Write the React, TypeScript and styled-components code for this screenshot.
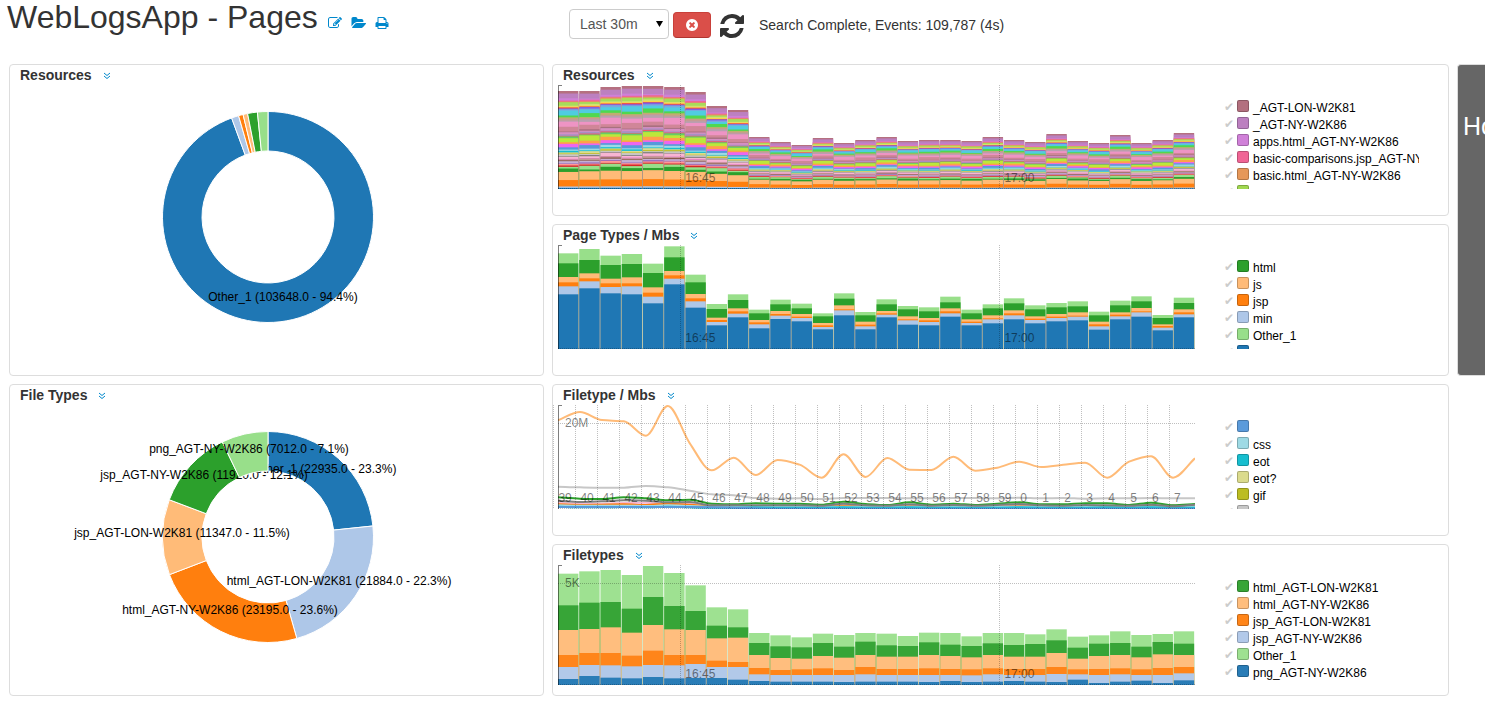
import React from 'react';
import styled, { createGlobalStyle } from 'styled-components';

const GlobalStyle = createGlobalStyle`
  * { box-sizing: border-box; }
  body {
    margin: 0;
    background: #fff;
    color: #333;
    font-family: "Liberation Sans", Arial, sans-serif;
    font-size: 14px;
    line-height: 20px;
    overflow-x: hidden;
  }
`;

/* ---------- styled parts ---------- */

const Header = styled.header`
  display: grid;
  grid-template-columns: minmax(0, 537fr) minmax(0, 897fr) 28px;
  column-gap: 8px;
  height: 64px;
  padding-left: 7px;
`;

const TitleBar = styled.div`
  display: flex;
  align-items: flex-start;
  gap: 10px;
`;

const PageTitle = styled.h1`
  margin: 0;
  font-size: 32px;
  font-weight: 400;
  line-height: 34px;
  white-space: nowrap;
`;

const TitleActions = styled.nav`
  display: flex;
  gap: 9px;
  padding-top: 16px;
`;

const IconLink = styled.a`
  display: flex;
  color: #0088cc;
`;

const Controls = styled.div`
  display: flex;
  align-items: flex-start;
  padding: 9px 0 0 17px;
`;

const SelectBox = styled.div`
  position: relative;
  width: 100px;
  margin-right: 4px;
`;

const RangeSelect = styled.select`
  appearance: none;
  display: block;
  width: 100%;
  height: 30px;
  padding: 0 10px;
  border: 1px solid #ccc;
  border-radius: 4px;
  background: #fff;
  color: #555;
  font: inherit;
`;

const SelectArrow = styled.svg`
  position: absolute;
  right: 6px;
  top: 12px;
  pointer-events: none;
`;

const StopButton = styled.button`
  display: flex;
  align-items: center;
  justify-content: center;
  width: 38px;
  height: 26px;
  margin: 3px 9px 0 0;
  padding: 0;
  border: 1px solid #c9403a;
  border-bottom-color: #b03530;
  border-radius: 4px;
  background: #da4f49;
  color: #fff;
`;

const RefreshButton = styled.button`
  display: flex;
  margin: 3px 15px 0 0;
  padding: 0;
  border: 0;
  background: none;
  color: #333;
`;

const Status = styled.span`
  padding-top: 6px;
  white-space: nowrap;
`;

const Dashboard = styled.main`
  display: grid;
  grid-template-columns: minmax(0, 535fr) minmax(0, 897fr) 28px;
  grid-auto-rows: 152px;
  gap: 8px;
  padding: 0 0 24px 9px;
`;

const Panel = styled.section<{ $col: number; $row: number; $span?: number }>`
  grid-column: ${(p) => p.$col};
  grid-row: ${(p) => p.$row} / span ${(p) => p.$span ?? 1};
  min-width: 0;
  border: 1px solid #ddd;
  border-radius: 4px;
  background: #fff;
`;

const DarkPanel = styled(Panel)`
  padding: 46px 0 0 5px;
  border-right: 0;
  border-radius: 4px 0 0 4px;
  background: #666;
  color: #fff;
  font-size: 25px;
  line-height: 30px;
  white-space: nowrap;
  overflow: hidden;
`;

const PanelHead = styled.div`
  display: flex;
  align-items: center;
  gap: 11px;
  height: 20px;
  padding-left: 10px;
`;

const PanelTitle = styled.h2`
  margin: 0;
  font-size: 14px;
  font-weight: 700;
  line-height: 20px;
`;

const MenuButton = styled.button`
  display: flex;
  margin-top: 2px;
  padding: 0;
  border: 0;
  background: none;
  color: #0088cc;
`;

const DonutArea = styled.div`
  display: flex;
  justify-content: center;
  padding: 26px 17px 0 0;
`;

const DonutSvg = styled.svg`
  overflow: visible;
  font-size: 12px;
`;

const ChartBody = styled.div<{ $height: number }>`
  display: flex;
  gap: 29px;
  height: ${(p) => p.$height}px;
  padding: 0 29px 0 5px;
`;

const ChartSvg = styled.svg`
  flex: 1;
  min-width: 0;
  height: 100%;
  overflow: visible;
  font-size: 12px;
`;

const Legend = styled.ul`
  flex: none;
  width: 195px;
  height: 100%;
  margin: 0;
  padding: 14px 0 0;
  overflow: hidden;
  list-style: none;
`;

const LegendRow = styled.label`
  display: flex;
  align-items: flex-start;
  height: 17px;
  color: #000;
  font-size: 12px;
  line-height: 18px;
  white-space: nowrap;
`;

const Tick = styled.input`
  appearance: none;
  flex: none;
  width: 10px;
  height: 17px;
  margin: 0 3px 0 0;
  color: #ccc;
  font-family: "DejaVu Sans", sans-serif;
  font-size: 12px;
  line-height: 17px;

  &:checked::before {
    content: "✔";
  }
`;

const Swatch = styled.span<{ $color: string }>`
  flex: none;
  width: 12px;
  height: 12px;
  margin: 1px 4px 0 0;
  border: 1px solid rgba(0, 0, 0, 0.22);
  border-radius: 2px;
  background: ${(p) => p.$color};
`;

/* ---------- icons ---------- */

const ICONS = {
  edit: {
    w: 1792,
    d: 'M888 1184l116-116-152-152-116 116v56h96v96h56zm440-720q-16-16-33 1l-350 350q-17 17-1 33t33-1l350-350q17-17 1-33zm80 594v190q0 119-84.5 203.5t-203.5 84.5h-832q-119 0-203.5-84.5t-84.5-203.5v-832q0-119 84.5-203.5t203.5-84.5h832q63 0 117 25 15 7 18 23 3 17-9 29l-49 49q-14 14-32 8-23-6-45-6h-832q-66 0-113 47t-47 113v832q0 66 47 113t113 47h832q66 0 113-47t47-113v-126q0-13 9-22l64-64q15-15 35-7t20 29zm-96-738l288 288-672 672h-288v-288zm444 132l-92 92-288-288 92-92q28-28 68-28t68 28l152 152q28 28 28 68t-28 68z',
  },
  open: {
    w: 1943,
    d: 'M1943 952q0 31-31 66l-336 396q-43 51-120.5 86.5t-143.5 35.5h-1088q-34 0-60.5-13t-26.5-43q0-31 31-66l336-396q43-51 120.5-86.5t143.5-35.5h1088q34 0 60.5 13t26.5 43zm-343-344v160h-832q-94 0-197 47.5t-164 119.5l-337 396-5 6q0-4-.5-12.5t-.5-12.5v-960q0-92 66-158t158-66h320q92 0 158 66t66 158v32h544q92 0 158 66t66 158z',
  },
  print: {
    w: 1792,
    d: 'M448 1536h896v-256h-896v256zm0-640h896v-384h-160q-40 0-68-28t-28-68v-160h-640v640zm1152 64q0-26-19-45t-45-19-45 19-19 45 19 45 45 19 45-19 19-45zm128 0v416q0 13-9.5 22.5t-22.5 9.5h-224v160q0 40-28 68t-68 28h-960q-40 0-68-28t-28-68v-160h-224q-13 0-22.5-9.5t-9.5-22.5v-416q0-79 56.5-135.5t135.5-56.5h64v-544q0-40 28-68t68-28h672q40 0 88 20t76 48l152 152q28 28 48 76t20 88v256h64q79 0 135.5 56.5t56.5 135.5z',
  },
  stop: {
    w: 1792,
    d: 'M1277 1122q0-26-19-45l-181-181 181-181q19-19 19-45 0-27-19-46l-90-90q-19-19-46-19-26 0-45 19l-181 181-181-181q-19-19-45-19-27 0-46 19l-90 90q-19 19-19 46 0 26 19 45l181 181-181 181q-19 19-19 45 0 27 19 46l90 90q19 19 46 19 26 0 45-19l181-181 181 181q19 19 45 19 27 0 46-19l90-90q19-19 19-46zm387-226q0 209-103 385.5t-279.5 279.5-385.5 103-385.5-103-279.5-279.5-103-385.5 103-385.5 279.5-279.5 385.5-103 385.5 103 279.5 279.5 103 385.5z',
  },
  refresh: {
    w: 1536,
    x: 128,
    d: 'M1639 1056q0 5-1 7-64 268-268 434.5t-478 166.5q-146 0-282.5-55t-243.5-157l-129 129q-19 19-45 19t-45-19-19-45v-448q0-26 19-45t45-19h448q26 0 45 19t19 45-19 45l-137 137q71 66 161 102t187 36q134 0 250-65t186-179q11-17 53-117 8-23 30-23h192q13 0 22.5 9.5t9.5 22.5zm25-800v448q0 26-19 45t-45 19h-448q-26 0-45-19t-19-45 19-45l138-138q-148-137-349-137-134 0-250 65t-186 179q-11 17-53 117-8 23-30 23h-199q-13 0-22.5-9.5t-9.5-22.5v-7q65-268 270-434.5t480-166.5q146 0 284 55.5t245 156.5l130-129q19-19 45-19t45 19 19 45z',
  },
};

function Icon({ name, size }: { name: keyof typeof ICONS; size: number }) {
  const icon = ICONS[name] as { w: number; x?: number; d: string };
  return (
    <svg
      width={Math.round((size * icon.w) / 1792)}
      height={size}
      viewBox={`${icon.x ?? 0} 0 ${icon.w} 1792`}
      fill="currentColor"
      aria-hidden="true"
    >
      <path d={icon.d} />
    </svg>
  );
}

function PanelHeading({ title }: { title: string }) {
  return (
    <PanelHead>
      <PanelTitle>{title}</PanelTitle>
      <MenuButton type="button" aria-label={`${title} options`}>
        <svg width="8" height="8" viewBox="0 0 8 8" fill="none" stroke="currentColor" aria-hidden="true">
          <path d="M1 1l3 2.5L7 1M1 4l3 2.5L7 4" />
        </svg>
      </MenuButton>
    </PanelHead>
  );
}

/* ---------- donut charts ---------- */

const CATEGORY = ['#1f77b4', '#aec7e8', '#ff7f0e', '#ffbb78', '#2ca02c', '#98df8a'];

interface Slice {
  value: number;
  label?: string;
  x?: number;
  y?: number;
}

const RESOURCE_SLICES: Slice[] = [
  { value: 94.4, label: 'Other_1 (103648.0 - 94.4%)', x: 15, y: 84 },
  { value: 1.1 },
  { value: 0.7 },
  { value: 0.7 },
  { value: 1.5 },
  { value: 1.6 },
];

const FILE_SLICES: Slice[] = [
  { value: 22935, label: 'Other_1 (22935.0 - 23.3%)', x: 57, y: -64 },
  { value: 21884, label: 'html_AGT-LON-W2K81 (21884.0 - 22.3%)', x: 71, y: 48 },
  { value: 23195, label: 'html_AGT-NY-W2K86 (23195.0 - 23.6%)', x: -38, y: 77 },
  { value: 11347, label: 'jsp_AGT-LON-W2K81 (11347.0 - 11.5%)', x: -86, y: 0 },
  { value: 11920, label: 'jsp_AGT-NY-W2K86 (11920.0 - 12.1%)', x: -64, y: -58 },
  { value: 7012, label: 'png_AGT-NY-W2K86 (7012.0 - 7.1%)', x: -19, y: -84 },
];

function arcPath(start: number, end: number, outer: number, inner: number) {
  const at = (angle: number, r: number) => `${r * Math.sin(angle)} ${-r * Math.cos(angle)}`;
  const large = end - start > Math.PI ? 1 : 0;
  return `M${at(start, outer)}A${outer} ${outer} 0 ${large} 1 ${at(end, outer)}L${at(end, inner)}A${inner} ${inner} 0 ${large} 0 ${at(start, inner)}Z`;
}

function Donut({ slices, name }: { slices: Slice[]; name: string }) {
  const total = slices.reduce((sum, s) => sum + s.value, 0);
  let angle = 0;
  return (
    <DonutArea>
      <DonutSvg width="212" height="212" viewBox="-106 -106 212 212" role="img" aria-label={name}>
        {slices.map((s, i) => {
          const start = angle;
          angle += (s.value / total) * Math.PI * 2;
          return (
            <g key={i}>
              <path d={arcPath(start, angle, 105.5, 66)} fill={CATEGORY[i]} stroke="#fff" />
              {s.label && (
                <text x={s.x} y={s.y} textAnchor="middle" fill="#000">
                  {s.label}
                </text>
              )}
            </g>
          );
        })}
      </DonutSvg>
    </DonutArea>
  );
}

/* ---------- stacked bars ---------- */

interface Layer {
  color: string;
  size: number;
}

/* Every row lists the top edge of each layer, from the highest layer down. */
const PAGE_TOPS = [
  [99, 129, 170, 186, 198, 222], [86, 119, 159, 174, 183, 204], [106, 134, 175, 189, 200, 219],
  [101, 131, 171, 189, 198, 222], [130, 158, 201, 217, 229, 249], [78, 111, 152, 165, 175, 192],
  [163, 186, 221, 234, 243, 262], [251, 266, 292, 299, 305, 315], [222, 239, 264, 273, 280, 291],
  [268, 279, 299, 306, 312, 324], [238, 252, 272, 281, 286, 296], [250, 264, 281, 289, 293, 303],
  [279, 288, 308, 315, 320, 327], [219, 235, 255, 267, 270, 285], [275, 285, 304, 313, 318, 327],
  [237, 252, 272, 279, 283, 291], [257, 267, 288, 297, 300, 313], [261, 273, 293, 300, 305, 315],
  [229, 246, 264, 273, 279, 289], [268, 279, 297, 304, 308, 315], [252, 264, 285, 294, 297, 309],
  [234, 249, 270, 279, 285, 297], [255, 267, 288, 295, 299, 309], [248, 261, 281, 289, 293, 303],
  [243, 258, 276, 286, 289, 300], [274, 285, 304, 312, 318, 328], [241, 255, 276, 283, 288, 297],
  [228, 243, 263, 273, 276, 289], [284, 293, 312, 317, 322, 330], [232, 248, 267, 276, 282, 291],
];

const FILE_TOPS = [
  [101, 196, 270, 345, 381, 417], [94, 188, 267, 339, 375, 408], [90, 186, 262, 339, 376, 413],
  [105, 206, 278, 347, 379, 415], [78, 171, 255, 332, 375, 411], [99, 198, 268, 345, 376, 415],
  [136, 213, 270, 345, 372, 414], [202, 257, 295, 362, 381, 414], [208, 262, 293, 366, 381, 419],
  [279, 309, 345, 384, 403, 423], [286, 319, 354, 390, 405, 425], [292, 322, 356, 388, 405, 425],
  [281, 309, 348, 385, 405, 425], [285, 320, 353, 390, 405, 426], [279, 305, 345, 381, 403, 425],
  [281, 316, 350, 387, 405, 425], [288, 318, 350, 387, 405, 425], [278, 307, 345, 385, 405, 426],
  [279, 314, 348, 387, 405, 423], [289, 318, 352, 388, 406, 426], [279, 310, 345, 385, 403, 425],
  [279, 315, 350, 387, 405, 423], [283, 312, 350, 387, 405, 425], [268, 301, 339, 381, 402, 426],
  [290, 323, 356, 388, 403, 419], [286, 311, 348, 387, 405, 429], [274, 309, 345, 385, 403, 425],
  [285, 320, 352, 388, 405, 422], [282, 306, 343, 384, 405, 429], [274, 311, 345, 381, 400, 421],
];

function layersFromTops(rows: number[][], base: number, colors: string[]): Layer[][] {
  return rows.map((tops) =>
    tops.map((top, i) => ({ color: colors[i], size: ((tops[i + 1] ?? base) - top) / 3 })),
  );
}

const RESOURCE_HEIGHTS = [
  98, 98, 102, 103, 103, 102, 97, 83, 79, 52, 47, 44, 51, 46, 49,
  52, 48, 49, 49, 48, 52, 49, 47, 55, 48, 46, 54, 46, 49, 56,
];

/* Thin stripes from the top of the stack down to the broad base layers. */
const RESOURCE_STRIPES: [string, number][] = [
  ['#b57080', 9], ['#bc80c0', 17], ['#cf80d8', 6], ['#ee6699', 4], ['#e6955a', 3], ['#a8dc5a', 9],
  ['#d4e070', 4], ['#ffd54a', 3], ['#f0554a', 3], ['#8060e0', 4], ['#7aa8e0', 5], ['#50cce0', 13],
  ['#4fd84f', 10], ['#c0ae70', 5], ['#c49c94', 5], ['#b8a0b0', 6], ['#ee94c4', 16], ['#d08698', 14],
  ['#a87080', 4], ['#d68fc4', 6], ['#a890c4', 5], ['#e85c6c', 3], ['#66cc66', 5], ['#bce83a', 14],
  ['#ffa04a', 9], ['#ee66ee', 9], ['#5799db', 9], ['#9edae5', 6], ['#17becf', 4], ['#dbdb8d', 5],
  ['#bcbd22', 3], ['#c7c7c7', 5], ['#7f7f7f', 3], ['#f7b6d2', 8], ['#e377c2', 2], ['#c49c94', 4],
  ['#8c564b', 3], ['#c5b0d5', 6], ['#9467bd', 3], ['#ff9896', 5], ['#d62728', 4], ['#98df8a', 10],
  ['#2ca02c', 10], ['#ffbb78', 29], ['#ff7f0e', 23], ['#aec7e8', 5], ['#1f77b4', 4],
];

const RESOURCE_BARS: Layer[][] = RESOURCE_HEIGHTS.map((height, bar) => {
  const sized = RESOURCE_STRIPES.map(([color, size], i) => {
    const steady = i < 2 || i > 42;
    return { color, size: steady ? size : size * (1 + 0.4 * Math.sin(bar * 2.3 + i * 4.1)) };
  });
  const total = sized.reduce((sum, l) => sum + l.size, 0);
  return sized.map((l) => ({ color: l.color, size: (l.size / total) * height }));
});

const PAGE_BARS = layersFromTops(PAGE_TOPS, 386, ['#98df8a', '#2ca02c', '#ffbb78', '#ff7f0e', '#aec7e8', '#1f77b4']);
const FILE_BARS = layersFromTops(FILE_TOPS, 435, ['#9ee191', '#37a537', '#ffbe7e', '#ff851a', '#b2c9e9', '#2a7db7']);

interface Mark {
  at: number;
  label: string;
}

const QUARTERS: Mark[] = [
  { at: 19.2, label: '16:45' },
  { at: 69.3, label: '17:00' },
];

function Axes({ height, marks, level }: { height: number; marks: Mark[]; level?: string }) {
  return (
    <g stroke="#000" strokeOpacity="0.25" shapeRendering="crispEdges">
      <path d={`M4 0.5H0.5V${height}`} fill="none" strokeOpacity="0.5" />
      <line x1="0" x2="100%" y1={height - 0.5} y2={height - 0.5} strokeDasharray="1 1" />
      {level && (
        <>
          <line x1="0" x2="100%" y1="18.5" y2="18.5" strokeDasharray="1 1" />
          <text x="7" y="22" stroke="none" fill="#000" fillOpacity="0.5">
            {level}
          </text>
        </>
      )}
      {marks.map((m) => (
        <React.Fragment key={m.label}>
          <line x1={`${m.at}%`} x2={`${m.at}%`} y1="0" y2={height} strokeDasharray="1 1" />
          <svg x={`${m.at}%`} overflow="visible">
            <text x="5" y={height - 7} stroke="none" fill="#000" fillOpacity="0.5">
              {m.label}
            </text>
          </svg>
        </React.Fragment>
      ))}
    </g>
  );
}

function StackedBars({ bars, height, level, name }: { bars: Layer[][]; height: number; level?: string; name: string }) {
  const step = 100 / bars.length;
  return (
    <ChartSvg role="img" aria-label={name}>
      {bars.map((layers, bar) => {
        let y = height - layers.reduce((sum, l) => sum + l.size, 0);
        return layers.map((layer, i) => {
          const top = y;
          y += layer.size;
          /* Each layer runs to the base so no seam shows under the next one. */
          return (
            <rect
              key={`${bar}-${i}`}
              x={`${bar * step}%`}
              y={top}
              width={`${step * 0.96}%`}
              height={height - top}
              fill={layer.color}
            />
          );
        });
      })}
      <Axes height={height} marks={QUARTERS} level={level} />
    </ChartSvg>
  );
}

/* ---------- line chart ---------- */

interface Series {
  color: string;
  points: number[];
}

const LINE_SERIES: Series[] = [
  {
    color: '#ffbb78',
    points: [121, 96, 120, 124, 167, 78, 190, 271, 233, 285, 240, 254, 293, 223, 291, 234, 269, 270, 230, 272, 263, 245, 261, 254, 248, 293, 245, 229, 293, 235],
  },
  {
    color: '#c7c7c7',
    points: [320, 322, 323, 323, 318, 322, 332, 343, 346, 354, 356, 355, 357, 354, 354, 354, 355, 355, 354, 354, 355, 353, 355, 354, 356, 355, 355, 354, 355, 355],
  },
  {
    color: '#f7b6d2',
    points: [369, 371, 371, 369, 368, 372, 372, 379, 379, 379, 379, 378, 379, 376, 379, 379, 378, 379, 379, 379, 378, 377, 379, 378, 379, 379, 379, 378, 375, 379],
  },
  {
    color: '#ff7f0e',
    points: [373, 375, 374, 373, 375, 371, 374, 379, 380, 380, 380, 379, 380, 377, 380, 379, 379, 380, 380, 380, 380, 379, 380, 380, 380, 379, 380, 379, 380, 380],
  },
  {
    color: '#9edae5',
    points: [376, 377, 377, 377, 378, 376, 378, 380, 381, 380, 380, 380, 381, 380, 380, 380, 380, 380, 381, 380, 380, 380, 381, 380, 380, 380, 380, 380, 381, 380],
  },
  {
    color: '#17becf',
    points: [380, 382, 382, 381, 382, 380, 382, 383, 383, 382, 383, 383, 383, 382, 383, 383, 382, 383, 383, 383, 383, 382, 383, 383, 383, 382, 383, 382, 383, 383],
  },
  {
    color: '#5799db',
    points: [381, 381, 381, 381, 381, 381, 381, 382, 383, 385, 386, 386, 386, 386, 386, 386, 386, 386, 386, 386, 386, 386, 386, 386, 386, 386, 386, 386, 386, 386],
  },
  {
    color: '#2ca02c',
    points: [352, 356, 357, 352, 355, 361, 359, 371, 373, 370, 371, 371, 374, 365, 372, 375, 367, 374, 371, 375, 371, 367, 373, 373, 370, 370, 375, 368, 376, 372],
  },
  {
    color: '#7f7f7f',
    points: [362, 366, 364, 361, 362, 367, 366, 376, 376, 376, 376, 376, 377, 371, 376, 377, 373, 377, 375, 377, 375, 372, 376, 377, 375, 376, 377, 374, 379, 374],
  },
];

/* Cubic curve whose tangents never overshoot the neighbouring points. */
function smoothPath(values: number[]) {
  const ys = values.map((v) => (v - 75) / 3);
  const slope = ys.map((y, i) => {
    if (i === 0 || i === ys.length - 1) return 0;
    const before = y - ys[i - 1];
    const after = ys[i + 1] - y;
    return before * after <= 0 ? 0 : (2 * before * after) / (before + after);
  });
  slope[0] = ys[1] - ys[0];
  slope[ys.length - 1] = ys[ys.length - 1] - ys[ys.length - 2];
  let d = `M0 ${ys[0]}`;
  for (let i = 1; i < ys.length; i += 1) {
    d += `C${i - 0.667} ${ys[i - 1] + slope[i - 1] / 3} ${i - 0.333} ${ys[i] - slope[i] / 3} ${i} ${ys[i]}`;
  }
  return d;
}

const MINUTES: Mark[] = Array.from({ length: 29 }, (_, i) => ({
  at: -0.72 + i * 3.452,
  label: String((39 + i) % 60),
}));

function LineChart({ height, name }: { height: number; name: string }) {
  return (
    <ChartSvg role="img" aria-label={name}>
      <svg width="100%" height={height} viewBox={`0 0 29 ${height}`} preserveAspectRatio="none">
        {LINE_SERIES.map((s) => (
          <path
            key={s.color}
            d={smoothPath(s.points)}
            fill="none"
            stroke={s.color}
            strokeWidth="2"
            vectorEffect="non-scaling-stroke"
          />
        ))}
      </svg>
      <Axes height={height} marks={MINUTES} level="20M" />
    </ChartSvg>
  );
}

/* ---------- legend ---------- */

type Entry = [label: string, color: string];

function ChartLegend({ entries }: { entries: Entry[] }) {
  return (
    <Legend>
      {entries.map(([label, color]) => (
        <li key={color}>
          <LegendRow>
            <Tick type="checkbox" defaultChecked aria-label={label || 'unnamed'} />
            <Swatch $color={color} />
            {label}
          </LegendRow>
        </li>
      ))}
    </Legend>
  );
}

const RESOURCE_LEGEND: Entry[] = [
  ['_AGT-LON-W2K81', '#b3707f'],
  ['_AGT-NY-W2K86', '#bc80c0'],
  ['apps.html_AGT-NY-W2K86', '#d080d8'],
  ['basic-comparisons.jsp_AGT-NY-W2K86', '#f06595'],
  ['basic.html_AGT-NY-W2K86', '#e6985a'],
  ['', '#a0d850'],
];

const PAGE_LEGEND: Entry[] = [
  ['html', '#2ca02c'],
  ['js', '#ffbb78'],
  ['jsp', '#ff7f0e'],
  ['min', '#aec7e8'],
  ['Other_1', '#98df8a'],
  ['', '#1f77b4'],
];

const TYPE_LEGEND: Entry[] = [
  ['', '#5b9bdb'],
  ['css', '#9edae5'],
  ['eot', '#17becf'],
  ['eot?', '#dbdb8d'],
  ['gif', '#bcbd22'],
  ['', '#c7c7c7'],
];

const FILE_LEGEND: Entry[] = [
  ['html_AGT-LON-W2K81', '#37a537'],
  ['html_AGT-NY-W2K86', '#ffbe7e'],
  ['jsp_AGT-LON-W2K81', '#ff851a'],
  ['jsp_AGT-NY-W2K86', '#b2c9e9'],
  ['Other_1', '#9ee191'],
  ['png_AGT-NY-W2K86', '#2a7db7'],
];

/* ---------- page ---------- */

export default function App() {
  return (
    <>
      <GlobalStyle />
      <Header>
        <TitleBar>
          <PageTitle>WebLogsApp - Pages</PageTitle>
          <TitleActions aria-label="Page actions">
            <IconLink href="#edit" aria-label="Edit">
              <Icon name="edit" size={14} />
            </IconLink>
            <IconLink href="#open" aria-label="Open">
              <Icon name="open" size={14} />
            </IconLink>
            <IconLink href="#print" aria-label="Print">
              <Icon name="print" size={14} />
            </IconLink>
          </TitleActions>
        </TitleBar>
        <Controls>
          <SelectBox>
            <RangeSelect aria-label="Time range" defaultValue="30m">
              <option value="30m">Last 30m</option>
            </RangeSelect>
            <SelectArrow width="7" height="6" viewBox="0 0 7 6" aria-hidden="true">
              <path d="M0 0h7L3.5 6z" fill="#000" />
            </SelectArrow>
          </SelectBox>
          <StopButton type="button" aria-label="Stop search">
            <Icon name="stop" size={14} />
          </StopButton>
          <RefreshButton type="button" aria-label="Refresh">
            <Icon name="refresh" size={28} />
          </RefreshButton>
          <Status>Search Complete, Events: 109,787 (4s)</Status>
        </Controls>
      </Header>

      <Dashboard>
        <Panel $col={1} $row={1} $span={2}>
          <PanelHeading title="Resources" />
          <Donut slices={RESOURCE_SLICES} name="Resources" />
        </Panel>
        <Panel $col={1} $row={3} $span={2}>
          <PanelHeading title="File Types" />
          <Donut slices={FILE_SLICES} name="File Types" />
        </Panel>

        <Panel $col={2} $row={1}>
          <PanelHeading title="Resources" />
          <ChartBody $height={104}>
            <StackedBars bars={RESOURCE_BARS} height={104} name="Resources over time" />
            <ChartLegend entries={RESOURCE_LEGEND} />
          </ChartBody>
        </Panel>
        <Panel $col={2} $row={2}>
          <PanelHeading title="Page Types / Mbs" />
          <ChartBody $height={104}>
            <StackedBars bars={PAGE_BARS} height={104} name="Page types over time" />
            <ChartLegend entries={PAGE_LEGEND} />
          </ChartBody>
        </Panel>
        <Panel $col={2} $row={3}>
          <PanelHeading title="Filetype / Mbs" />
          <ChartBody $height={104}>
            <LineChart height={104} name="File type sizes over time" />
            <ChartLegend entries={TYPE_LEGEND} />
          </ChartBody>
        </Panel>
        <Panel $col={2} $row={4}>
          <PanelHeading title="Filetypes" />
          <ChartBody $height={120}>
            <StackedBars bars={FILE_BARS} height={120} level="5K" name="File types over time" />
            <ChartLegend entries={FILE_LEGEND} />
          </ChartBody>
        </Panel>

        <DarkPanel $col={3} $row={1} $span={2}>
          Ho
        </DarkPanel>
      </Dashboard>
    </>
  );
}
